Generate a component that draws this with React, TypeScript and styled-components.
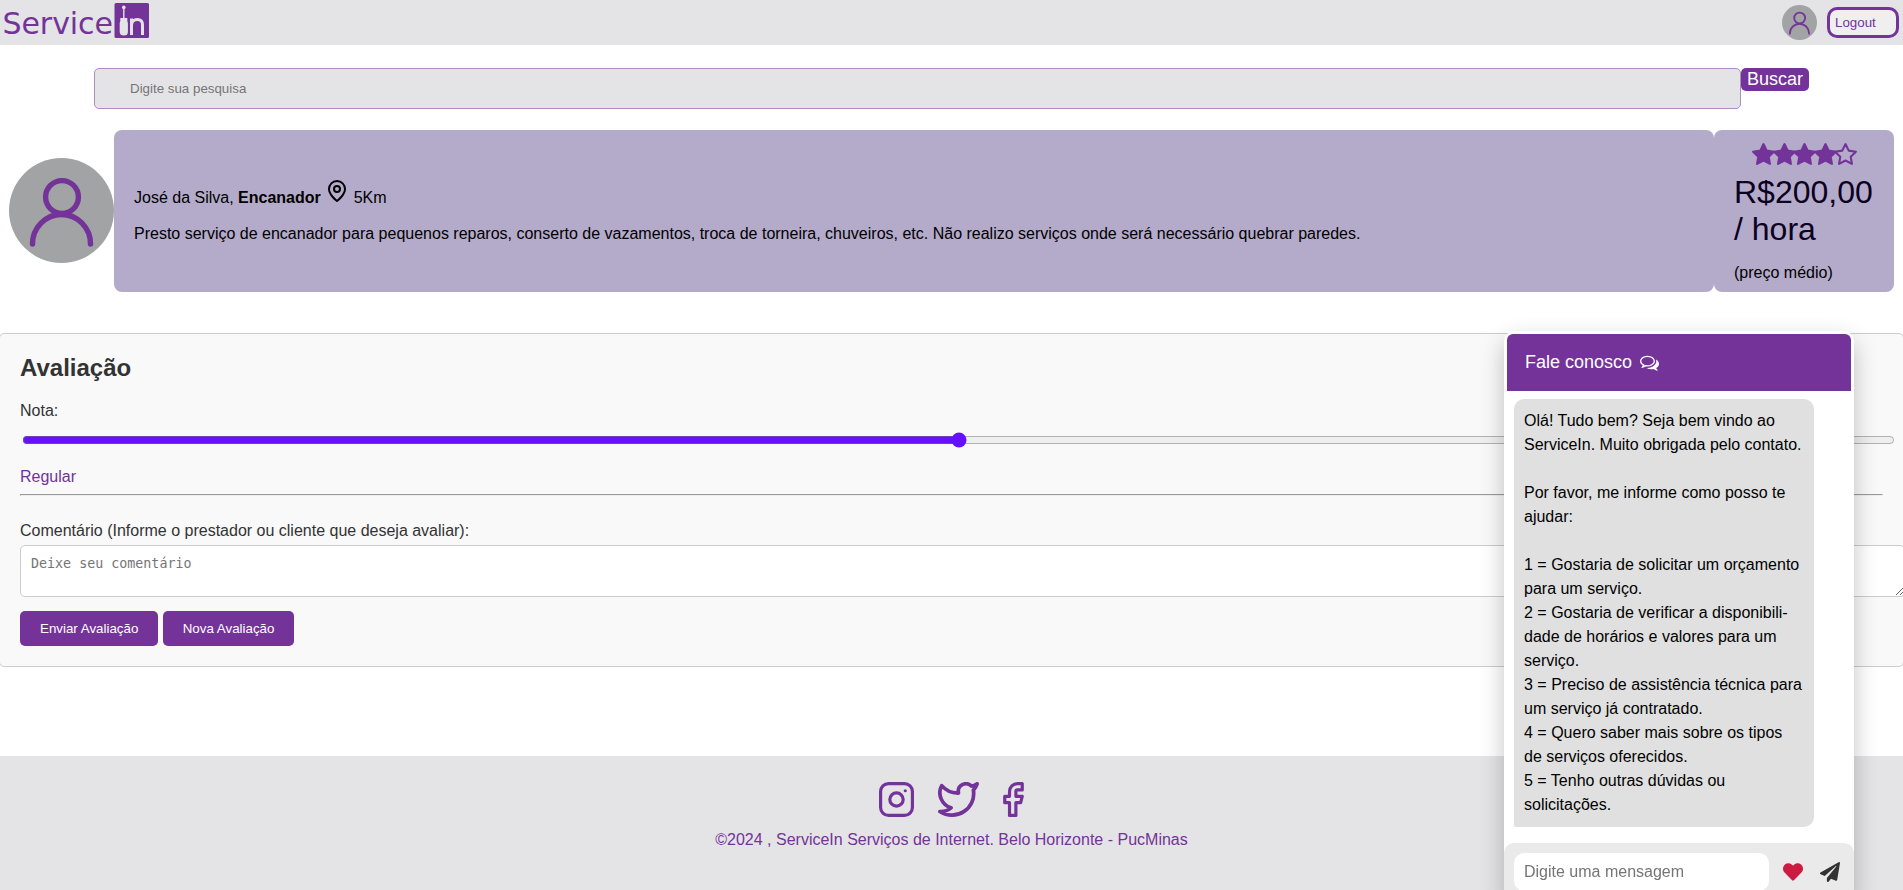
import React, { useState } from 'react';
import styled, { createGlobalStyle } from 'styled-components';
import { FaHeart, FaPaperPlane } from 'react-icons/fa';

const purple = '#733399';

const GlobalStyle = createGlobalStyle`
  html, body { margin: 0; height: 100%; overflow: hidden; }
  body { background: #fff; font-family: "Liberation Sans", Arial, sans-serif; font-size: 16px; color: #000; }
  #root { height: 100%; }
`;

const Page = styled.div`
  display: flex;
  flex-direction: column;
  height: 890px;
  overflow: hidden;
`;

const Header = styled.header`
  display: flex;
  justify-content: space-between;
  align-items: center;
  height: 45px;
  flex: none;
  background: #e4e4e6;
  padding-right: 4px;
`;

const HeaderActions = styled.div`
  display: flex;
  align-items: center;
  gap: 10px;
`;

const LogoutButton = styled.button`
  box-sizing: border-box;
  width: 72px;
  height: 31px;
  padding: 0 5px;
  border: 3px solid ${purple};
  border-radius: 10px;
  background: #efefef;
  color: ${purple};
  font: 13.333px "Liberation Sans", Arial, sans-serif;
  text-align: left;
`;

const SearchForm = styled.form`
  display: flex;
  align-items: flex-start;
  margin: 23px 0 0 94px;
`;

const SearchInput = styled.input`
  box-sizing: border-box;
  width: 1647px;
  height: 41px;
  padding: 0 35px;
  border: 1px solid #b08cc6;
  border-radius: 5px;
  background: #e4e4e6;
  font: 13.333px "Liberation Sans", Arial, sans-serif;
  &::placeholder { color: #757575; }
`;

const SearchButton = styled.button`
  height: 23px;
  width: 68px;
  padding: 0;
  border: 0;
  border-radius: 5px;
  background: ${purple};
  color: #fff;
  font: 18px/23px "Liberation Sans", Arial, sans-serif;
`;

const Provider = styled.section`
  display: flex;
  align-items: center;
  margin: 21px 9px 0;
`;

const Card = styled.div<{ $width: number }>`
  box-sizing: border-box;
  display: flex;
  flex-direction: column;
  width: ${(p) => p.$width}px;
  height: 162px;
  padding: 0 20px;
  border-radius: 8px;
  background: #b4abca;
`;

const ProviderName = styled.p`
  margin: 49px 0 0;
  height: 28px;
  line-height: 18px;
  white-space: pre;
`;

const PinIcon = styled.svg`
  width: 24px;
  height: 24px;
  vertical-align: baseline;
`;

const Description = styled.p`
  margin: 18px 0 0;
  line-height: 18px;
`;

const Stars = styled.div`
  display: flex;
  margin: 12px 0 0 17px;
  height: 25px;
`;

const StarIcon = styled.svg`
  flex: none;
  width: 25px;
  height: 25px;
  margin-right: -4.4px;
`;

const Price = styled.p`
  margin: 7px 0 0;
  font-size: 32px;
  line-height: 37px;
  color: #0b0120;
`;

const PriceNote = styled.p`
  margin: 16px 0 0;
  line-height: 18px;
`;

const Review = styled.section`
  box-sizing: border-box;
  flex: none;
  height: 334px;
  margin: 41px -1px 0;
  padding: 20px;
  border: 1px solid #ccc;
  border-radius: 5px;
  background: #f9f9f9;
  color: #333;
`;

const Title = styled.h2`
  margin: 0;
  font-size: 24px;
  line-height: 27px;
`;

const Label = styled.label<{ $top: number }>`
  display: block;
  margin-top: ${(p) => p.$top}px;
  line-height: 18px;
`;

const Slider = styled.input`
  display: block;
  box-sizing: border-box;
  width: calc(100% + 10px);
  height: 16px;
  margin: 12px 0 0 2px;
  accent-color: #6610ff;
`;

const Grade = styled.p`
  margin: 20px 0 0;
  line-height: 18px;
  color: ${purple};
`;

const Divider = styled.hr`
  margin: 8px 0 0;
`;

const Comment = styled.textarea`
  display: block;
  box-sizing: content-box;
  width: 100%;
  height: 30px;
  margin: 5px 0 0;
  padding: 10px;
  border: 1px solid #ccc;
  border-radius: 5px;
  font: 13.333px "DejaVu Sans Mono", monospace;
  &::placeholder { color: #757575; }
`;

const Buttons = styled.div`
  display: flex;
  gap: 4.45px;
  margin-top: 14px;
`;

const ActionButton = styled.button`
  height: 35px;
  padding: 0 20px;
  border: 0;
  border-radius: 5px;
  background: ${purple};
  color: #fff;
  font: 13.333px "Liberation Sans", Arial, sans-serif;
`;

const Footer = styled.footer`
  display: flex;
  flex-direction: column;
  align-items: center;
  flex: none;
  height: 134px;
  margin-top: 89px;
  background: #e4e4e6;
  color: ${purple};
`;

const Social = styled.div`
  display: flex;
  align-items: center;
  gap: 24px;
  height: 35px;
  margin: 26px 0 0;
`;

const Copyright = styled.p`
  margin: 14px 0 0;
  line-height: 18px;
`;

const Chat = styled.aside`
  position: fixed;
  top: 331px;
  left: 1504px;
  width: 350px;
  height: 570px;
  border-radius: 10px;
  background: #fff;
  box-shadow: 0 10px 24px rgba(0, 0, 0, 0.24);
`;

const ChatHeader = styled.div`
  display: flex;
  align-items: center;
  gap: 7.5px;
  box-sizing: border-box;
  height: 57px;
  margin: 0 3px;
  padding-left: 18px;
  border-radius: 6px 6px 0 0;
  background: ${purple};
  color: #fff;
  font-size: 18px;
`;

const ChatBody = styled.div`
  display: flex;
  flex-direction: column;
  padding-top: 3px;
`;

const Bubble = styled.div`
  box-sizing: border-box;
  width: 300px;
  margin: 8px 0 16px 10px;
  padding: 10px;
  border-radius: 10px 10px 10px 2px;
  background: #e0e0e0;
  line-height: 24px;
  white-space: pre;
`;

const Composer = styled.div`
  display: flex;
  align-items: center;
  box-sizing: border-box;
  height: 58px;
  padding: 0 14px 0 10px;
  border-radius: 10px;
  background: #eaeaea;
`;

const MessageInput = styled.input`
  box-sizing: border-box;
  width: 255px;
  height: 38px;
  margin-right: 14px;
  padding: 0 10px;
  border: 0;
  border-radius: 10px;
  background: #fff;
  font: 16px "Liberation Sans", Arial, sans-serif;
  &::placeholder { color: #757575; }
`;

const HeartIcon = styled(FaHeart)`
  color: #cc1b41;
  margin-right: 17px;
`;

const AvatarIcon = styled.svg<{ $raise?: number }>`
  flex: none;
  margin-bottom: ${(p) => p.$raise ?? 0}px;
`;

const LogoText = styled.text`
  font: normal 400 30px "DejaVu Sans", Verdana, sans-serif;
  fill: ${purple};
`;

const Logo = () => (
  <svg width="152" height="45" role="img" aria-label="ServiceIn">
    <LogoText x="2.500" y="34.300" textLength="110.500">Service</LogoText>
    <rect x="114.5" y="3" width="34.5" height="35" rx="1.5" fill={purple} />
    <circle cx="123.8" cy="7.4" r="1.8" fill="#e4e4e6" />
    <path d="M123.8 8V19" stroke="#e4e4e6" strokeWidth="1.4" />
    <path d="M120.3 18h7v3l.6 2v9q0 3.5-4 3.5t-4.2-3.5v-9l.6-2z" fill="#e4e4e6" />
    <path d="M131.5 35V18.5M131.5 25q.5-5.5 5.8-5.5t5.2 5.5V35" fill="none" stroke="#e4e4e6" strokeWidth="3" />
  </svg>
);

const Avatar = ({ size, raise }: { size: number; raise?: number }) => (
  <AvatarIcon width={size} height={size} viewBox="0 0 105 105" $raise={raise}>
    <circle cx="52.5" cy="52.5" r="52.5" fill="#a1a3a4" />
    <g fill="none" stroke={purple} strokeWidth="5.4" strokeLinecap="round">
      <circle cx="53" cy="39" r="16.4" />
      <path d="M23.5 86a29 29.5 0 0 1 58 0" />
    </g>
  </AvatarIcon>
);

const Star = ({ filled }: { filled: boolean }) => (
  <StarIcon viewBox="0 0 24 24" fill={filled ? purple : 'none'} stroke={purple} strokeWidth="2" strokeLinejoin="round">
    <path d="M12 2l3.09 6.26L22 9.27l-5 4.87 1.18 6.88L12 17.77l-6.18 3.25L7 14.14 2 9.27l6.91-1.01z" />
  </StarIcon>
);

const message = `Olá! Tudo bem? Seja bem vindo ao
ServiceIn. Muito obrigada pelo contato.

Por favor, me informe como posso te
ajudar:

1 = Gostaria de solicitar um orçamento
para um serviço.
2 = Gostaria de verificar a disponibili-
dade de horários e valores para um
serviço.
3 = Preciso de assistência técnica para
um serviço já contratado.
4 = Quero saber mais sobre os tipos
de serviços oferecidos.
5 = Tenho outras dúvidas ou
solicitações.`;

export default function App() {
  const [grade, setGrade] = useState(50);
  return (
    <Page>
      <GlobalStyle />
      <Header>
        <Logo />
        <HeaderActions>
          <Avatar size={35} />
          <LogoutButton>Logout</LogoutButton>
        </HeaderActions>
      </Header>

      <SearchForm>
        <SearchInput placeholder="Digite sua pesquisa" />
        <SearchButton type="button">Buscar</SearchButton>
      </SearchForm>

      <Provider>
        <Avatar size={105} raise={1} />
        <Card $width={1600}>
          <ProviderName>
            José da Silva, <b>Encanador</b>{' '}
            <PinIcon viewBox="0 0 24 24" fill="none" stroke="#000" strokeWidth="2" strokeLinecap="round" strokeLinejoin="round">
              <path d="M20 10c0 6-8 12-8 12s-8-6-8-12a8 8 0 0 1 16 0Z" />
              <circle cx="12" cy="10" r="3" />
            </PinIcon>
            {' '}5Km
          </ProviderName>
          <Description>
            Presto serviço de encanador para pequenos reparos, conserto de vazamentos, troca de torneira, chuveiros, etc.
            Não realizo serviços onde será necessário quebrar paredes.
          </Description>
        </Card>
        <Card $width={180}>
          <Stars>
            {[1, 2, 3, 4, 5].map((n) => <Star key={n} filled={n < 5} />)}
          </Stars>
          <Price>R$200,00<br />/ hora</Price>
          <PriceNote>(preço médio)</PriceNote>
        </Card>
      </Provider>

      <Review>
        <Title>Avaliação</Title>
        <Label $top={21}>Nota:</Label>
        <Slider type="range" min={0} max={100} value={grade} onChange={(e) => setGrade(Number(e.target.value))} />
        <Grade>Regular</Grade>
        <Divider />
        <Label $top={26}>Comentário (Informe o prestador ou cliente que deseja avaliar):</Label>
        <Comment placeholder="Deixe seu comentário" />
        <Buttons>
          <ActionButton>Enviar Avaliação</ActionButton>
          <ActionButton>Nova Avaliação</ActionButton>
        </Buttons>
      </Review>

      <Footer>
        <Social>
          <svg width="35" height="35" viewBox="1 1 22 22" fill="none" stroke={purple} strokeWidth="2" strokeLinecap="round">
            <rect x="2" y="2" width="20" height="20" rx="5" />
            <circle cx="12" cy="12" r="4.2" />
            <path d="M17.5 6.5h.01" />
          </svg>
          <svg width="41" height="35" viewBox="1 3 22 19" preserveAspectRatio="none" fill="none" stroke={purple} strokeWidth="2" strokeLinecap="round" strokeLinejoin="round">
            <path d="M22 4s-.7 2.1-2 3.4c1.6 10-9.4 17.3-18 11.6 2.2.1 4.4-.6 6-2C3 15.5.5 9.6 3 5c2.2 2.6 5.6 4.1 9 4-.9-4.2 4-6.6 7-3.8 1.1 0 3-1.2 3-1.2z" />
          </svg>
          <svg width="21" height="35" viewBox="6 1 13 22" fill="none" stroke={purple} strokeWidth="2" strokeLinecap="round" strokeLinejoin="round">
            <path d="M18 2h-3a5 5 0 0 0-5 5v3H7v4h3v8h4v-8h3l1-4h-4V7a1 1 0 0 1 1-1h3z" />
          </svg>
        </Social>
        <Copyright>©2024 , ServiceIn Serviços de Internet. Belo Horizonte - PucMinas</Copyright>
      </Footer>

      <Chat>
        <ChatBody>
          <ChatHeader>
            Fale conosco
            <svg width="19" height="19" viewBox="0 0 1792 1792" fill="#fff">
              <path d="M704 384q-153 0-286 52t-211.5 141-78.5 191q0 82 53 158t149 132l97 56-35 84q34-20 62-39l44-31 53 10q78 14 153 14 153 0 286-52t211.5-141 78.5-191-78.5-191-211.5-141-286-52zm0-128q191 0 353.5 68.5t256.5 186.5 94 257-94 257-256.5 186.5-353.5 68.5q-86 0-176-16-124 88-278 128-36 9-86 16h-3q-11 0-20.5-8t-11.5-21q-1-3-1-6.5t.5-6.5 2-6l2.5-5 3.5-5.5 4-5 4.5-5 4-4.5q5-6 23-25t26-29.5 22.5-29 25-38.5 20.5-44q-124-72-195-177t-71-224q0-139 94-257t256.5-186.5 353.5-68.5zm822 1169q10 24 20.5 44t25 38.5 22.5 29 26 29.5 23 25q1 1 4 4.5t4.5 5 4 5 3.5 5.5l2.5 5 2 6 .5 6.5-1 6.5q-3 14-13 22t-22 7q-50-7-86-16-154-40-278-128-90 16-176 16-271 0-472-132 58 4 88 4 161 0 309-45t264-129q125-92 192-212t67-254q0-77-23-152 129 71 204 178t75 230q0 120-71 224.5t-195 176.5z" />
            </svg>
          </ChatHeader>
          <Bubble>{message}</Bubble>
          <Composer>
            <MessageInput placeholder="Digite uma mensagem" />
            <HeartIcon size={20} />
            <FaPaperPlane size={20} color="#333" />
          </Composer>
        </ChatBody>
      </Chat>
    </Page>
  );
}
